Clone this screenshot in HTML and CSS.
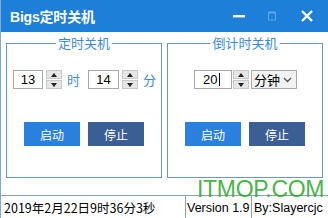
FILE: index.html
```html
<!DOCTYPE html>
<html>
<head>
<meta charset="utf-8">
<link rel="stylesheet" href="styles.css">
</head>
<body>
<div class="window">
  <div class="titlebar">
    <span class="title">Bigs定时关机</span>
    <div class="controls">
      <svg class="ctl min" width="14" height="14" viewBox="0 0 14 14"><rect x="1" y="6" width="12" height="2.4" fill="#fff"/></svg>
      <svg class="ctl max" width="14" height="14" viewBox="0 0 14 14"><rect x="3.5" y="3" width="7" height="8" fill="none" stroke="#5ea8f0" stroke-width="1"/><rect x="3.5" y="3" width="7" height="1.5" fill="#5ea8f0"/></svg>
      <svg class="ctl close" width="14" height="14" viewBox="0 0 14 14"><path d="M2 2 L12 12 M12 2 L2 12" stroke="#fff" stroke-width="2.4"/></svg>
    </div>
  </div>
  <div class="content">
    <div class="group">
      <span class="legend">定时关机</span>
      <div class="row">
        <div class="box w30">13</div>
        <div class="spin"><span class="up"></span><span class="down"></span></div>
        <span class="unit">时</span>
        <div class="box w31">14</div>
        <div class="spin"><span class="up"></span><span class="down"></span></div>
        <span class="unit">分</span>
      </div>
      <div class="buttons">
        <button class="btn start">启动</button>
        <button class="btn stop">停止</button>
      </div>
    </div>
    <div class="group">
      <span class="legend">倒计时关机</span>
      <div class="row">
        <div class="box w38 left">20<span class="caret"></span></div>
        <div class="spin tight"><span class="up"></span><span class="down"></span></div>
        <div class="select">分钟<svg width="9" height="6" viewBox="0 0 9 6"><path d="M1 1 L4.5 4.5 L8 1" stroke="#555" stroke-width="1.4" fill="none"/></svg></div>
      </div>
      <div class="buttons">
        <button class="btn start">启动</button>
        <button class="btn stop">停止</button>
      </div>
    </div>
  </div>
  <div class="status">
    <span class="seg date"><span class="txt">2019年2月22日9时36分3秒</span></span>
    <span class="seg ver"><span class="txt">Version 1.9</span></span>
    <span class="seg by"><span class="txt">By:Slayercjc</span></span>
  </div>
  <div class="watermark">ITMOP.COM</div>
</div>
</body>
</html>
```
FILE: styles.css
```css
* { box-sizing: border-box; }
html, body { margin: 0; padding: 0; background: #fff; }
body { font-family: "Noto Sans CJK SC", "Liberation Sans", sans-serif; }
.window {
  position: relative;
  width: 328px;
  height: 218px;
  display: flex;
  flex-direction: column;
  background: #fff;
  border-left: 1px solid #7fa9d0;
  overflow: hidden;
}
.titlebar {
  height: 32px;
  flex: none;
  background: #1d7fd8;
  display: flex;
  align-items: center;
  padding-left: 10px;
  margin-left: -1px;
}
.title {
  color: #fff;
  font-weight: bold;
  font-size: 14px;
  font-family: "Liberation Sans", "Noto Sans CJK SC", sans-serif;
  letter-spacing: -0.2px;
}
.controls {
  margin-left: auto;
  display: flex;
  align-items: center;
}
.ctl { display: block; }
.min { margin-right: 19px; }
.max { margin-right: 21px; }
.close { margin-right: 14px; }
.content {
  flex: none;
  display: flex;
  gap: 5px;
  padding: 11px 0 0 5px;
}
.group {
  position: relative;
  width: 156px;
  height: 135px;
  border: 1px solid #6d97bd;
  display: flex;
  flex-direction: column;
  align-items: center;
}
.legend {
  position: absolute;
  top: -10px;
  left: 50%;
  transform: translateX(-50%);
  background: #fff;
  color: #3b8cd8;
  font-size: 13px;
  line-height: 18px;
  padding: 0 2px;
  white-space: nowrap;
}
.row {
  display: flex;
  align-items: center;
  margin-top: 26px;
  height: 19px;
  padding-left: 1px;
}
.box {
  height: 19px;
  border: 1px solid #a9a9a9;
  font-size: 13px;
  line-height: 17px;
  text-align: center;
  color: #000;
  font-family: "Liberation Sans", sans-serif;
  background: #fff;
}
.w30 { width: 30px; }
.w31 { width: 31px; margin-left: 8px; }
.w38 { width: 38px; }
.box.left { padding-left: 8px; display: flex; align-items: center; }
.caret { display: inline-block; width: 1px; height: 13px; background: #000; margin-left: 2px; }
.spin {
  width: 16px;
  height: 19px;
  margin-left: 3px;
  display: flex;
  flex-direction: column;
  gap: 1px;
}
.spin.tight { margin-left: 1px; }
.spin span {
  flex: 1;
  background: #e6e6e6;
  border: 1px solid #c8c8c8;
  position: relative;
}
.spin .up::after, .spin .down::after {
  content: "";
  position: absolute;
  left: 4px;
  top: 2px;
  border-left: 3px solid transparent;
  border-right: 3px solid transparent;
}
.spin .up::after { border-bottom: 4px solid #222; }
.spin .down::after { border-top: 4px solid #222; }
.unit {
  color: #3b8cd8;
  font-size: 13px;
  margin-left: 5px;
}
.select {
  margin-left: 2px;
  width: 46px;
  height: 19px;
  border: 1px solid #a9a9a9;
  background: #f2f2f2;
  font-size: 13px;
  display: flex;
  align-items: center;
  justify-content: space-between;
  padding: 0 4px 0 2px;
  color: #000;
}
.buttons {
  display: flex;
  gap: 8px;
  margin-top: 33px;
}
.btn {
  width: 56px;
  height: 24px;
  border: 0;
  color: #fff;
  font-size: 12px;
  font-family: "Noto Sans CJK SC", sans-serif;
  padding: 0;
}
.start { background: #2a80dd; }
.stop { background: #3b5f94; }
.status {
  margin-top: auto;
  height: 23px;
  border-top: 1px solid #8aa2b8;
  display: flex;
  align-items: center;
  font-size: 12.5px;
  color: #000;
}
.seg {
  height: 100%;
  display: flex;
  align-items: center;
  white-space: nowrap;
  padding-top: 2px;
}
.txt { line-height: 14px; }
.date { width: 185px; padding-left: 3px; border-right: 1px solid #a0a0a0; }
.ver { width: 66px; padding-left: 1px; border-right: 1px solid #a0a0a0; font-family: "Liberation Sans", sans-serif; }
.by { padding-left: 2px; font-family: "Liberation Sans", sans-serif; }
.watermark {
  position: absolute;
  left: 196px;
  top: 181px;
  font-family: "Liberation Sans", sans-serif;
  font-size: 23px;
  color: rgba(50, 170, 50, 0.9);
  letter-spacing: -0.3px;
  line-height: 16px;
}
```
